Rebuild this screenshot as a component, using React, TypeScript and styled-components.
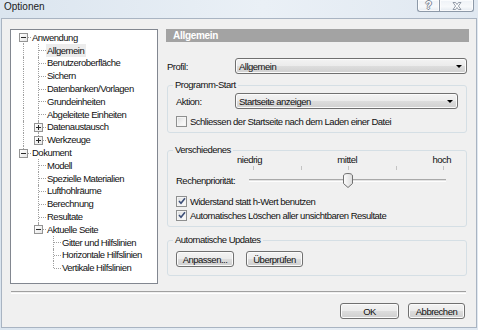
import React from 'react';
import styled, { createGlobalStyle } from 'styled-components';

const Global = createGlobalStyle`
  html, body { margin: 0; padding: 0; }
  body { width: 478px; height: 330px; overflow: hidden; background: #e6edf5; }
`;

const Window = styled.div`
  width: 478px;
  height: 330px;
  box-sizing: border-box;
  display: flex;
  flex-direction: column;
  padding: 0 1px 2px 1px;
  background: linear-gradient(90deg, #dbe5ef 0%, #eaf0f6 55%, #e0e8f1 100%);
  font-family: "Liberation Sans", Arial, sans-serif;
  font-size: 9.5px;
  letter-spacing: -0.5px;
  color: #111;
`;

const TitleBar = styled.div`
  height: 18px;
  flex: none;
  display: flex;
  align-items: flex-start;
  justify-content: space-between;
`;

const TitleText = styled.div`
  padding-left: 3px;
  line-height: 14px;
  font-size: 10px;
  letter-spacing: 0;
  color: #1a1a1a;
`;

const Caption = styled.div`
  display: flex;
  margin-right: 3px;
`;

const CaptionButton = styled.div<{ $w: number; $first?: boolean }>`
  width: ${(p) => p.$w}px;
  height: 12px;
  box-sizing: border-box;
  border: 1px solid #8d99a8;
  border-top: none;
  ${(p) => (p.$first ? 'border-right: none; border-bottom-left-radius: 3px;' : 'border-bottom-right-radius: 3px;')}
  background: linear-gradient(180deg, #eef2f7 0%, #f7f9fb 60%, #e4eaf1 100%);
  box-shadow: inset 0 0 0 1px rgba(255, 255, 255, 0.7);
  display: flex;
  align-items: center;
  justify-content: center;
  font-size: 10px;
  font-weight: bold;
  letter-spacing: 0;
  color: #fff;
  text-shadow: 1px 0 0 #7b8594, -1px 0 0 #7b8594, 0 1px 0 #7b8594, 0 -1px 0 #7b8594;
  line-height: 12px;
`;

const Client = styled.div`
  flex: 1;
  display: flex;
  flex-direction: column;
  background: #f0f0f0;
  border: 1px solid #a9b4c2;
`;

const Main = styled.div`
  display: flex;
  gap: 8px;
  padding: 10px 0 0 8px;
`;

const TreePanel = styled.div`
  width: 148px;
  height: 255px;
  box-sizing: border-box;
  background: #fff;
  border: 1px solid #828790;
  padding: 1px 0 0 5px;
`;

const TreeRow = styled.div`
  height: 12.8px;
  display: flex;
  align-items: stretch;
  white-space: nowrap;
`;

const Cell = styled.span<{ $up?: boolean; $down?: boolean; $right?: boolean }>`
  position: relative;
  width: 15px;
  flex: none;
  &::before {
    content: '';
    display: ${(p) => (p.$up || p.$down ? 'block' : 'none')};
    position: absolute;
    left: 7px;
    top: ${(p) => (p.$up ? '0' : '50%')};
    bottom: ${(p) => (p.$down ? '0' : '50%')};
    border-left: 1px dotted #a0a0a0;
  }
  &::after {
    content: '';
    display: ${(p) => (p.$right ? 'block' : 'none')};
    position: absolute;
    left: 8px;
    right: 0;
    top: 50%;
    border-top: 1px dotted #a0a0a0;
  }
`;

const Expander = styled.span<{ $open: boolean }>`
  position: absolute;
  z-index: 1;
  left: 3px;
  top: calc(50% - 4px);
  width: 9px;
  height: 9px;
  box-sizing: border-box;
  border: 1px solid #949494;
  background: linear-gradient(135deg, #ffffff 0%, #e6e6e6 100%);
  &::before {
    content: '';
    position: absolute;
    left: 1px;
    right: 1px;
    top: 3px;
    height: 1px;
    background: #2a2a2a;
  }
  &::after {
    content: '';
    display: ${(p) => (p.$open ? 'none' : 'block')};
    position: absolute;
    top: 1px;
    bottom: 1px;
    left: 3px;
    width: 1px;
    background: #2a2a2a;
  }
`;

const TreeLabel = styled.span<{ $selected?: boolean }>`
  display: flex;
  align-items: center;
  padding: 0 2px 0 1px;
  background: ${(p) => (p.$selected ? '#ececec' : 'transparent')};
`;

const RightPanel = styled.div`
  width: 303px;
  display: flex;
  flex-direction: column;
`;

const Header = styled.div`
  height: 13px;
  line-height: 13px;
  background: #a3a3a3;
  color: #fff;
  font-weight: bold;
  font-size: 10px;
  letter-spacing: -0.3px;
  padding-left: 7px;
`;

const FormRow = styled.div<{ $indent?: number; $top?: number }>`
  display: flex;
  align-items: center;
  margin-top: ${(p) => p.$top ?? 0}px;
  padding-left: ${(p) => p.$indent ?? 0}px;
`;

const FieldLabel = styled.span<{ $w: number }>`
  width: ${(p) => p.$w}px;
  flex: none;
`;

const Select = styled.div<{ $w?: number }>`
  ${(p) => (p.$w ? `width: ${p.$w}px;` : 'flex: 1;')}
  height: 16px;
  box-sizing: border-box;
  border: 1px solid #707070;
  border-radius: 3px;
  background: linear-gradient(180deg, #f3f3f3 0%, #ebebeb 50%, #dddddd 51%, #d0d0d0 100%);
  box-shadow: inset 0 0 0 1px #fbfbfb;
  display: flex;
  align-items: center;
  justify-content: space-between;
  padding: 0 4px 0 3px;
`;

const Arrow = styled.span`
  width: 0;
  height: 0;
  border-left: 3px solid transparent;
  border-right: 3px solid transparent;
  border-top: 3px solid #000;
`;

const Group = styled.fieldset<{ $top: number }>`
  margin: ${(p) => p.$top}px 0 0 1px;
  width: 300px;
  box-sizing: border-box;
  min-width: 0;
  border: 1px solid #d5dfe5;
  border-radius: 3px;
  padding: 0;
`;

const Legend = styled.legend`
  margin-left: 5px;
  padding: 0 2px;
  line-height: 10px;
  color: #111;
`;

const GroupBody = styled.div<{ $pt: number; $pb: number }>`
  display: flex;
  flex-direction: column;
  padding: ${(p) => p.$pt}px 8px ${(p) => p.$pb}px 8px;
`;

const CheckRow = styled.label<{ $top: number }>`
  display: flex;
  align-items: center;
  gap: 3px;
  height: 12px;
  margin-top: ${(p) => p.$top}px;
`;

const Box = styled.span`
  width: 11px;
  height: 11px;
  box-sizing: border-box;
  flex: none;
  border: 1px solid #8e8f8f;
  background: linear-gradient(135deg, #d9dadb 0%, #f4f4f4 60%, #fcfcfc 100%);
  box-shadow: inset 0 0 0 1px #f4f4f4;
  display: flex;
  align-items: center;
  justify-content: center;
`;

const SliderLabels = styled.div`
  margin-left: 61px;
  width: 214px;
  height: 10px;
  line-height: 10px;
  display: flex;
  justify-content: space-between;
`;

const Ticks = styled.div`
  margin: 1px 0 0 77px;
  width: 191px;
  height: 4px;
  display: flex;
  justify-content: space-between;
`;

const Tick = styled.span`
  width: 1px;
  height: 4px;
  background: #c4c4c4;
`;

const SliderArea = styled.div`
  position: relative;
  width: 197px;
  height: 16px;
`;

const Track = styled.div`
  margin-top: 7px;
  height: 1px;
  border-top: 1px solid #a9a9a9;
  border-bottom: 1px solid #fdfdfd;
  background: #e2e2e2;
`;

const Thumb = styled.svg`
  position: absolute;
  top: 1px;
`;

const Button = styled.div<{ $w: number }>`
  width: ${(p) => p.$w}px;
  height: 16px;
  box-sizing: border-box;
  border: 1px solid #707070;
  border-radius: 3px;
  background: linear-gradient(180deg, #f3f3f3 0%, #ebebeb 50%, #dddddd 51%, #cfcfcf 100%);
  box-shadow: inset 0 0 0 1px #fbfbfb;
  display: flex;
  align-items: center;
  justify-content: center;
`;

const ButtonRow = styled.div`
  display: flex;
  gap: 12px;
`;

const Separator = styled.div`
  margin: 7px 10px 0 9px;
  height: 1px;
  border-top: 1px solid #a0a0a0;
  border-bottom: 1px solid #ffffff;
`;

const Footer = styled.div`
  display: flex;
  justify-content: flex-end;
  gap: 9px;
  padding: 9px 11px 0 0;
`;

type Node = { label: string; children?: Node[]; expanded?: boolean; selected?: boolean };

const tree: Node[] = [
  {
    label: 'Anwendung',
    expanded: true,
    children: [
      { label: 'Allgemein', selected: true },
      { label: 'Benutzeroberfläche' },
      { label: 'Sichern' },
      { label: 'Datenbanken/Vorlagen' },
      { label: 'Grundeinheiten' },
      { label: 'Abgeleitete Einheiten' },
      { label: 'Datenaustausch', children: [{ label: 'x' }] },
      { label: 'Werkzeuge', children: [{ label: 'x' }] },
    ],
  },
  {
    label: 'Dokument',
    expanded: true,
    children: [
      { label: 'Modell' },
      { label: 'Spezielle Materialien' },
      { label: 'Lufthohlräume' },
      { label: 'Berechnung' },
      { label: 'Resultate' },
      {
        label: 'Aktuelle Seite',
        expanded: true,
        children: [
          { label: 'Gitter und Hilfslinien' },
          { label: 'Horizontale Hilfslinien' },
          { label: 'Vertikale Hilfslinien' },
        ],
      },
    ],
  },
];

type Row = { node: Node; ancestorsLast: boolean[]; last: boolean; first: boolean };

function flatten(nodes: Node[], ancestorsLast: boolean[], out: Row[], isRoot: boolean) {
  nodes.forEach((n, i) => {
    const last = i === nodes.length - 1;
    out.push({ node: n, ancestorsLast, last, first: isRoot && i === 0 });
    if (n.children && n.expanded) flatten(n.children, [...ancestorsLast, last], out, false);
  });
  return out;
}

const rows = flatten(tree, [], [], true);

const CheckMark = () => (
  <svg width="8" height="8" viewBox="0 0 8 8">
    <path d="M1 4 L3 6.2 L7 1.2" fill="none" stroke="#3d4f78" strokeWidth="1.6" />
  </svg>
);

const Checkbox = ({ checked, label, top }: { checked?: boolean; label: string; top: number }) => (
  <CheckRow $top={top}>
    <Box>{checked && <CheckMark />}</Box>
    <span>{label}</span>
  </CheckRow>
);

const SLIDER_W = 197;
const THUMB_W = 10;

export default function App() {
  const value = 2;
  const max = 4;
  const thumbLeft = ((SLIDER_W - THUMB_W) * value) / max;
  return (
    <>
      <Global />
      <Window>
        <TitleBar>
          <TitleText>Optionen</TitleText>
          <Caption>
            <CaptionButton $w={22} $first>?</CaptionButton>
            <CaptionButton $w={35}>
              <svg width="10" height="8" viewBox="0 0 10 8">
                <path
                  d="M1 0.5 H3.5 L5 2.5 L6.5 0.5 H9 L6.4 4 L9 7.5 H6.5 L5 5.5 L3.5 7.5 H1 L3.6 4 Z"
                  fill="#fff"
                  stroke="#7b8594"
                  strokeWidth="0.8"
                />
              </svg>
            </CaptionButton>
          </Caption>
        </TitleBar>
        <Client>
          <Main>
            <TreePanel>
              {rows.map((r, idx) => {
                const hasKids = !!r.node.children;
                return (
                  <TreeRow key={idx}>
                    {r.ancestorsLast.map((al, j) => (
                      <Cell key={j} $up={!al} $down={!al} />
                    ))}
                    <Cell $up={!r.first} $down={!r.last} $right>
                      {hasKids && <Expander $open={!!r.node.expanded} />}
                    </Cell>
                    <TreeLabel $selected={r.node.selected}>{r.node.label}</TreeLabel>
                  </TreeRow>
                );
              })}
            </TreePanel>
            <RightPanel>
              <Header>Allgemein</Header>
              <FormRow $top={16} $indent={1}>
                <FieldLabel $w={68}>Profil:</FieldLabel>
                <Select $w={232}>
                  <span>Allgemein</span>
                  <Arrow />
                </Select>
              </FormRow>

              <Group $top={6}>
                <Legend>Programm-Start</Legend>
                <GroupBody $pt={3} $pb={5}>
                  <FormRow>
                    <FieldLabel $w={59}>Aktion:</FieldLabel>
                    <Select>
                      <span>Startseite anzeigen</span>
                      <Arrow />
                    </Select>
                  </FormRow>
                  <Checkbox top={6} label="Schliessen der Startseite nach dem Laden einer Datei" />
                </GroupBody>
              </Group>

              <Group $top={12}>
                <Legend>Verschiedenes</Legend>
                <GroupBody $pt={0} $pb={5}>
                  <SliderLabels>
                    <span>niedrig</span>
                    <span>mittel</span>
                    <span>hoch</span>
                  </SliderLabels>
                  <Ticks>
                    {[0, 1, 2, 3, 4].map((t) => (
                      <Tick key={t} />
                    ))}
                  </Ticks>
                  <FormRow $top={2}>
                    <FieldLabel $w={73}>Rechenpriorität:</FieldLabel>
                    <SliderArea>
                      <Track />
                      <Thumb width="10" height="15" viewBox="0 0 10 15" style={{ left: thumbLeft }}>
                        <defs>
                          <linearGradient id="thumbg" x1="0" y1="0" x2="1" y2="0">
                            <stop offset="0" stopColor="#fdfdfd" />
                            <stop offset="1" stopColor="#dcdcdc" />
                          </linearGradient>
                        </defs>
                        <path
                          d="M0.5 3 Q0.5 0.5 5 0.5 Q9.5 0.5 9.5 3 V10.5 L5 14.5 L0.5 10.5 Z"
                          fill="url(#thumbg)"
                          stroke="#707070"
                        />
                      </Thumb>
                    </SliderArea>
                  </FormRow>
                  <Checkbox top={7} checked label="Widerstand statt h-Wert benutzen" />
                  <Checkbox top={2} checked label="Automatisches Löschen aller unsichtbaren Resultate" />
                </GroupBody>
              </Group>

              <Group $top={8}>
                <Legend>Automatische Updates</Legend>
                <GroupBody $pt={6} $pb={8}>
                  <ButtonRow>
                    <Button $w={58}>Anpassen...</Button>
                    <Button $w={57}>Überprüfen</Button>
                  </ButtonRow>
                </GroupBody>
              </Group>
            </RightPanel>
          </Main>
          <Separator />
          <Footer>
            <Button $w={59}>OK</Button>
            <Button $w={57}>Abbrechen</Button>
          </Footer>
        </Client>
      </Window>
    </>
  );
}
